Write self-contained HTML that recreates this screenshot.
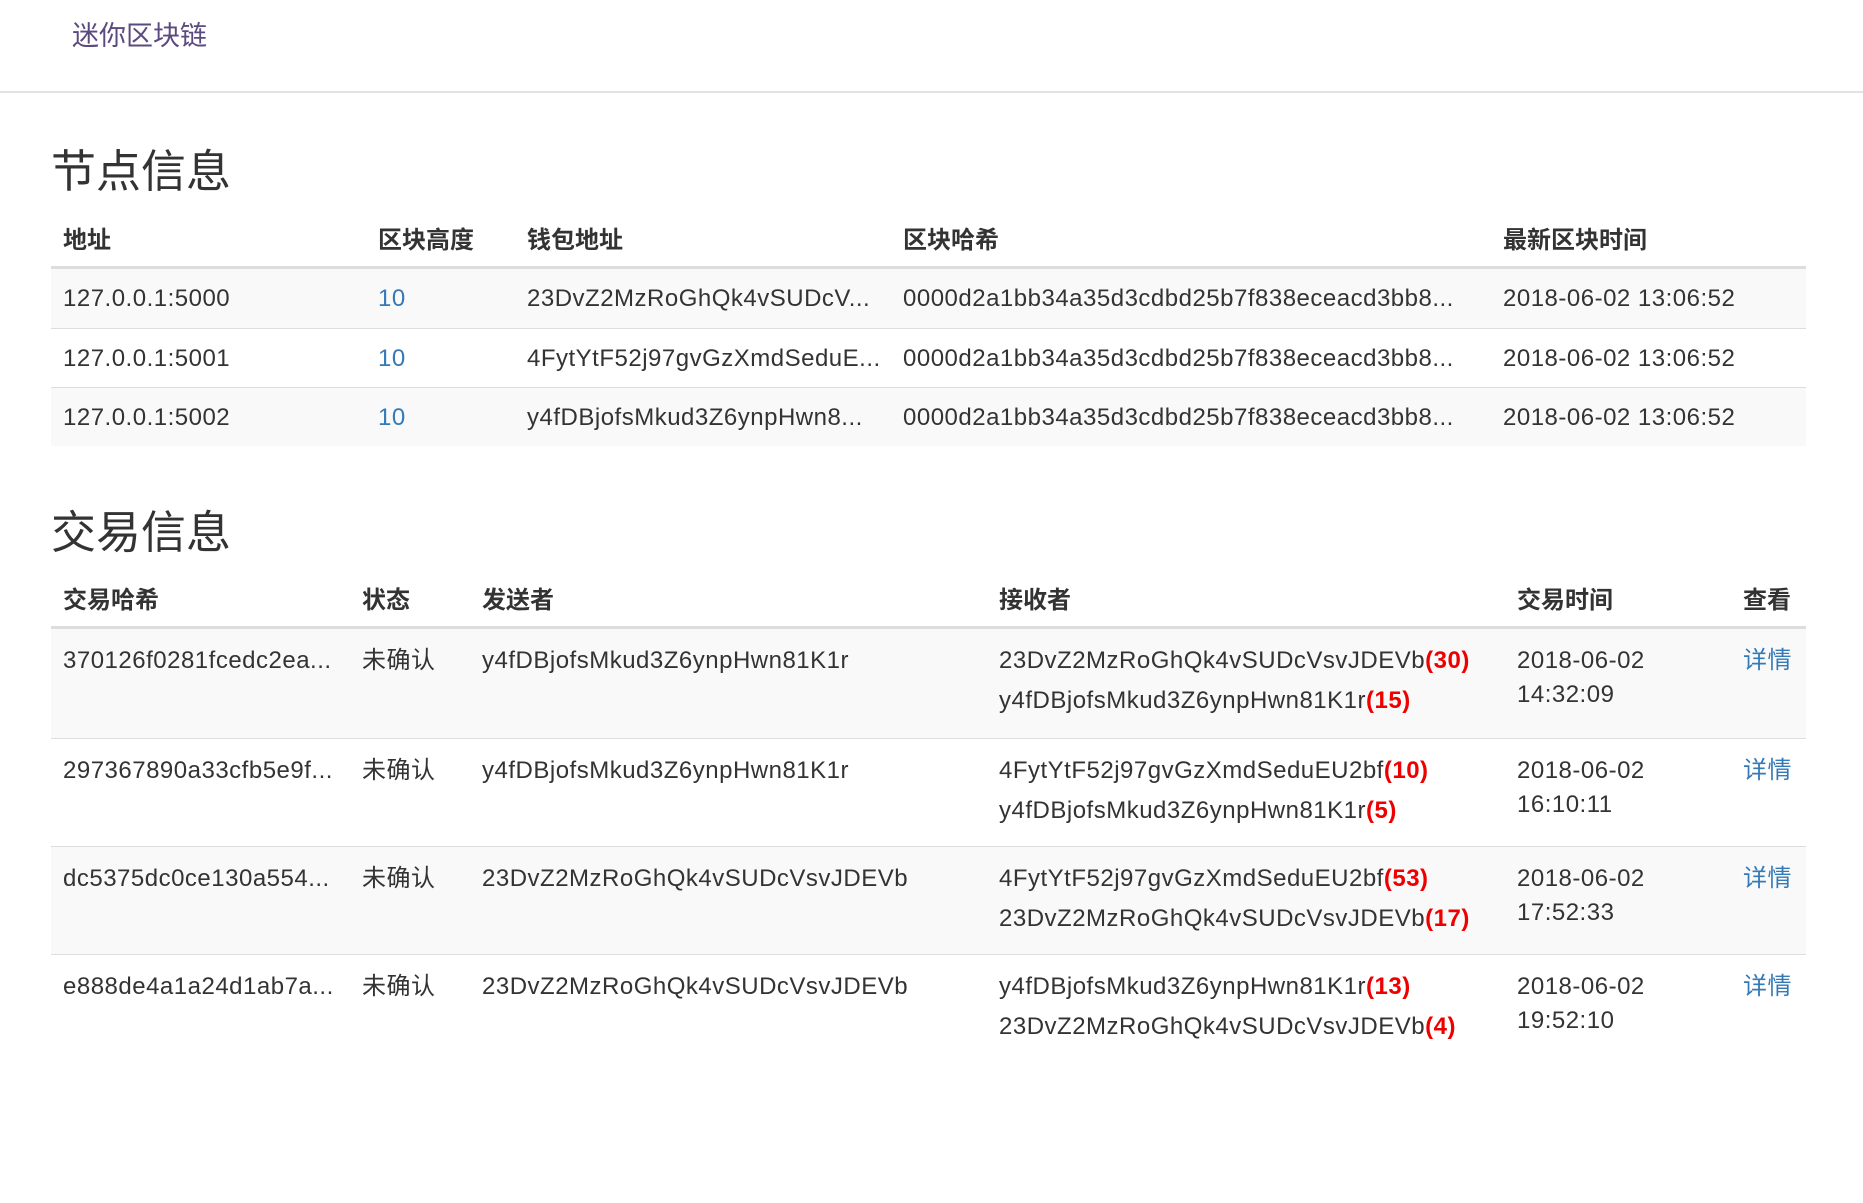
<!DOCTYPE html>
<html><head><meta charset="utf-8">
<style>
*{margin:0;padding:0;box-sizing:border-box}
body{width:1863px;height:1203px;background:#fff;font-family:"Liberation Sans","Noto Sans CJK SC",sans-serif;color:#333;font-size:24px;position:relative;overflow:hidden}
.nav{position:absolute;left:0;top:0;width:1863px;height:93px;border-bottom:2px solid #e3e3e3}
.brand{position:absolute;left:72px;top:16px;font-size:27px;color:#5b4a7e;line-height:40px}
h2{position:absolute;left:51px;font-size:45px;font-weight:normal;line-height:50px;color:#333}
.row{position:absolute;left:51px;width:1755px;border-top:1px solid #ddd}
.row.s{background:#f9f9f9}
.hd{position:absolute;left:51px;width:1755px;border-bottom:3px solid #ddd;font-weight:bold}
.c{position:absolute;white-space:nowrap;line-height:40px}
.row .c{letter-spacing:0.5px}
.b{color:#337ab7}
.r{color:#e00;font-weight:bold}
.t{top:15px !important;line-height:34px}
</style></head><body>
<div class="nav"><div class="brand">迷你区块链</div></div>

<h2 style="top:147px">节点信息</h2>
<div class="hd" style="top:219px;height:50px">
<div class="c" style="left:12px;top:2px">地址</div>
<div class="c" style="left:327px;top:2px">区块高度</div>
<div class="c" style="left:476px;top:2px">钱包地址</div>
<div class="c" style="left:852px;top:2px">区块哈希</div>
<div class="c" style="left:1452px;top:2px">最新区块时间</div>
</div>
<div class="row s" style="top:268px;height:60px">
<div class="c" style="left:12px;top:10px">127.0.0.1:5000</div><div class="c b" style="left:327px;top:10px">10</div>
<div class="c" style="left:476px;top:10px">23DvZ2MzRoGhQk4vSUDcV...</div><div class="c" style="left:852px;top:10px">0000d2a1bb34a35d3cdbd25b7f838eceacd3bb8...</div>
<div class="c" style="left:1452px;top:10px">2018-06-02 13:06:52</div></div>
<div class="row" style="top:328px;height:59px">
<div class="c" style="left:12px;top:10px">127.0.0.1:5001</div><div class="c b" style="left:327px;top:10px">10</div>
<div class="c" style="left:476px;top:10px">4FytYtF52j97gvGzXmdSeduE...</div><div class="c" style="left:852px;top:10px">0000d2a1bb34a35d3cdbd25b7f838eceacd3bb8...</div>
<div class="c" style="left:1452px;top:10px">2018-06-02 13:06:52</div></div>
<div class="row s" style="top:387px;height:59px">
<div class="c" style="left:12px;top:10px">127.0.0.1:5002</div><div class="c b" style="left:327px;top:10px">10</div>
<div class="c" style="left:476px;top:10px">y4fDBjofsMkud3Z6ynpHwn8...</div><div class="c" style="left:852px;top:10px">0000d2a1bb34a35d3cdbd25b7f838eceacd3bb8...</div>
<div class="c" style="left:1452px;top:10px">2018-06-02 13:06:52</div></div>

<h2 style="top:508px">交易信息</h2>
<div class="hd" style="top:579px;height:50px">
<div class="c" style="left:12px;top:2px">交易哈希</div>
<div class="c" style="left:311px;top:2px">状态</div>
<div class="c" style="left:431px;top:2px">发送者</div>
<div class="c" style="left:948px;top:2px">接收者</div>
<div class="c" style="left:1466px;top:2px">交易时间</div>
<div class="c" style="left:1692px;top:2px">查看</div>
</div>

<div class="row s" style="top:628px;height:110px">
<div class="c" style="left:12px;top:12px">370126f0281fcedc2ea...</div><div class="c" style="left:311px;top:12px">未确认</div>
<div class="c" style="left:431px;top:12px">y4fDBjofsMkud3Z6ynpHwn81K1r</div>
<div class="c" style="left:948px;top:12px">23DvZ2MzRoGhQk4vSUDcVsvJDEVb<span class="r">(30)</span><br>y4fDBjofsMkud3Z6ynpHwn81K1r<span class="r">(15)</span></div>
<div class="c t" style="left:1466px">2018-06-02<br>14:32:09</div><div class="c b" style="left:1692px;top:12px">详情</div></div>
<div class="row" style="top:738px;height:108px">
<div class="c" style="left:12px;top:12px">297367890a33cfb5e9f...</div><div class="c" style="left:311px;top:12px">未确认</div>
<div class="c" style="left:431px;top:12px">y4fDBjofsMkud3Z6ynpHwn81K1r</div>
<div class="c" style="left:948px;top:12px">4FytYtF52j97gvGzXmdSeduEU2bf<span class="r">(10)</span><br>y4fDBjofsMkud3Z6ynpHwn81K1r<span class="r">(5)</span></div>
<div class="c t" style="left:1466px">2018-06-02<br>16:10:11</div><div class="c b" style="left:1692px;top:12px">详情</div></div>
<div class="row s" style="top:846px;height:108px">
<div class="c" style="left:12px;top:12px">dc5375dc0ce130a554...</div><div class="c" style="left:311px;top:12px">未确认</div>
<div class="c" style="left:431px;top:12px">23DvZ2MzRoGhQk4vSUDcVsvJDEVb</div>
<div class="c" style="left:948px;top:12px">4FytYtF52j97gvGzXmdSeduEU2bf<span class="r">(53)</span><br>23DvZ2MzRoGhQk4vSUDcVsvJDEVb<span class="r">(17)</span></div>
<div class="c t" style="left:1466px">2018-06-02<br>17:52:33</div><div class="c b" style="left:1692px;top:12px">详情</div></div>
<div class="row" style="top:954px;height:108px">
<div class="c" style="left:12px;top:12px">e888de4a1a24d1ab7a...</div><div class="c" style="left:311px;top:12px">未确认</div>
<div class="c" style="left:431px;top:12px">23DvZ2MzRoGhQk4vSUDcVsvJDEVb</div>
<div class="c" style="left:948px;top:12px">y4fDBjofsMkud3Z6ynpHwn81K1r<span class="r">(13)</span><br>23DvZ2MzRoGhQk4vSUDcVsvJDEVb<span class="r">(4)</span></div>
<div class="c t" style="left:1466px">2018-06-02<br>19:52:10</div><div class="c b" style="left:1692px;top:12px">详情</div></div>
</body></html>
